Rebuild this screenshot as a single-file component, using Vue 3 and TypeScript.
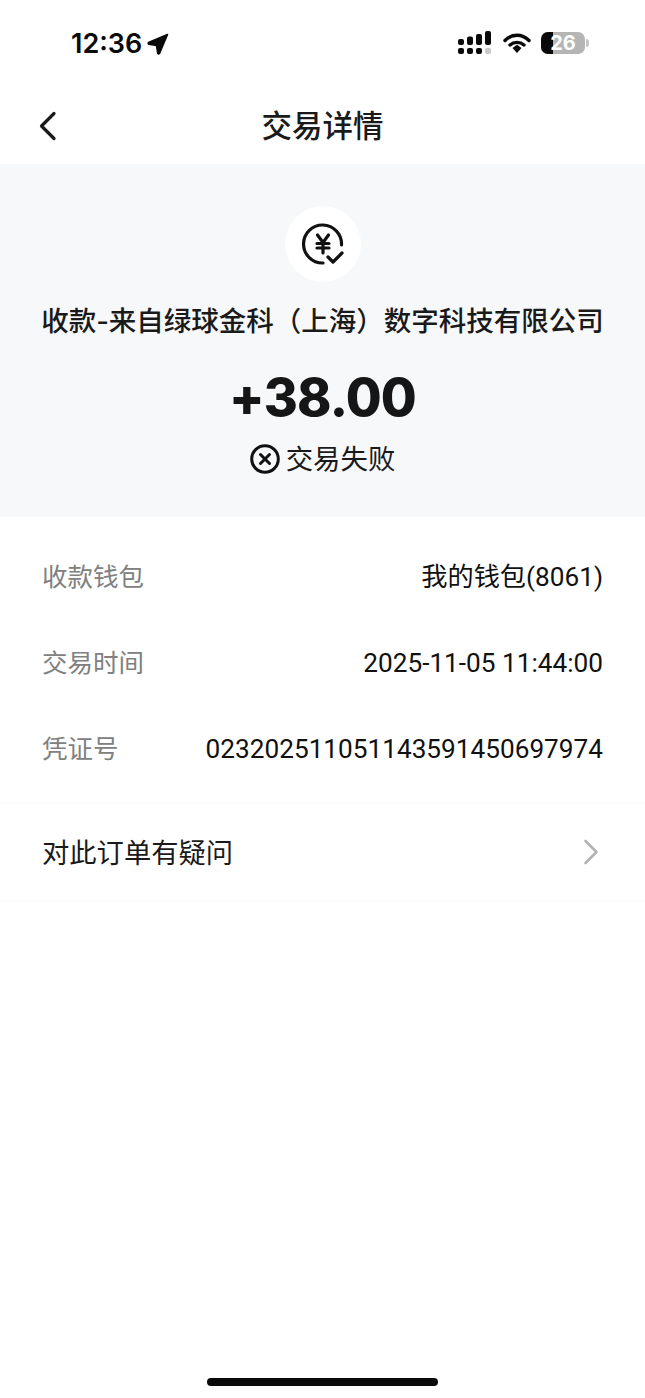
<script setup lang="ts">
interface InfoRow {
  label: string
  value: string
}

const rows: InfoRow[] = [
  { label: '收款钱包', value: '我的钱包(8061)' },
  { label: '交易时间', value: '2025-11-05 11:44:00' },
  { label: '凭证号', value: '023202511051143591450697974' }
]
</script>

<template>
  <div class="page">
    <div class="status-bar">
      <div class="time">
        <span>12:36</span>
        <svg class="arrow" width="22" height="22" viewBox="0 0 22 22">
          <path d="M20.500 1.500 L1.500 9.500 Q0.800 10.800 1.800 11.200 L9.500 12.500 L10.800 20.500 Q11.600 21.500 12.500 20.500 Z" fill="#0a0a0a" stroke="#0a0a0a" stroke-width="1.600" stroke-linejoin="round" />
        </svg>
      </div>
      <div class="status-icons">
        <svg width="36" height="24" viewBox="0 0 36 24">
          <rect x="1" y="8" width="6" height="6" rx="2" fill="#0a0a0a" />
          <rect x="10" y="5.500" width="6" height="8.500" rx="2" fill="#0a0a0a" />
          <rect x="19" y="3" width="6" height="11" rx="2" fill="#0a0a0a" />
          <rect x="28" y="0" width="6" height="14" rx="2" fill="#0a0a0a" />
          <rect x="1" y="17" width="6" height="6" rx="2" fill="#0a0a0a" />
          <rect x="10" y="17" width="6" height="6" rx="2" fill="#0a0a0a" />
          <rect x="19" y="17" width="6" height="6" rx="2" fill="#0a0a0a" />
          <rect x="28" y="17" width="6" height="6" rx="2" fill="#c9c9c9" />
        </svg>
        <svg width="28" height="22" viewBox="0 0 28 22">
          <path d="M2 8.500 C9 1.500 19 1.500 26 8.500" fill="none" stroke="#0a0a0a" stroke-width="3.400" stroke-linecap="round" />
          <path d="M7 13 C11 9.500 17 9.500 21 13" fill="none" stroke="#0a0a0a" stroke-width="3.400" stroke-linecap="round" />
          <path d="M9.500 16 L14 12.800 L18.500 16 L14 21 Z" fill="#0a0a0a" />
        </svg>
        <div class="battery">
          <div class="battery-body">
            <div class="battery-fill" />
            <span class="battery-text">26</span>
          </div>
          <div class="battery-cap" />
        </div>
      </div>
    </div>

    <div class="nav-bar">
      <svg class="back" width="20" height="30" viewBox="0 0 20 30">
        <path d="M16 2.500 L3.500 15 L16 27.500" fill="none" stroke="#1a1a1a" stroke-width="3.200" stroke-linecap="round" stroke-linejoin="round" />
      </svg>
      <div class="nav-title">交易详情</div>
    </div>

    <div class="hero">
      <div class="hero-icon">
        <svg width="44" height="44" viewBox="0 0 44 44">
          <path d="M22 41 A19 19 0 1 1 40.500 23" fill="none" stroke="#111" stroke-width="3.200" stroke-linecap="round" />
          <path d="M16.500 13 L22 20.500 L27.500 13 M16 21.500 H28 M16 26 H28 M22 20.500 V31" fill="none" stroke="#111" stroke-width="3.200" stroke-linecap="round" stroke-linejoin="round" />
          <path d="M27 35 L32 40 L41 31" fill="none" stroke="#111" stroke-width="3.200" stroke-linecap="round" stroke-linejoin="round" />
        </svg>
      </div>
      <div class="hero-name">收款-来自绿球金科（上海）数字科技有限公司</div>
      <div class="hero-amount">+38.00</div>
      <div class="hero-status">
        <svg width="30" height="30" viewBox="0 0 30 30">
          <circle cx="15" cy="15" r="13.300" fill="none" stroke="#111" stroke-width="3" />
          <path d="M10.500 10.500 L19.500 19.500 M19.500 10.500 L10.500 19.500" fill="none" stroke="#111" stroke-width="3" stroke-linecap="round" />
        </svg>
        <span>交易失败</span>
      </div>
    </div>

    <div class="info-list">
      <div v-for="row in rows" :key="row.label" class="info-row">
        <span class="info-label">{{ row.label }}</span>
        <span class="info-value">{{ row.value }}</span>
      </div>
    </div>

    <div class="question">
      <span class="question-text">对此订单有疑问</span>
      <svg width="16" height="26" viewBox="0 0 16 26">
        <path d="M2.500 2 L13.500 13 L2.500 24" fill="none" stroke="#b3b3b3" stroke-width="2.600" stroke-linecap="round" stroke-linejoin="round" />
      </svg>
    </div>

    <div class="home-indicator" />
  </div>
</template>

<style>
html,
body {
  margin: 0;
  background: #fff;
}
</style>

<style scoped>
.page {
  position: relative;
  width: 645px;
  height: 1398px;
  overflow: hidden;
  background: #fff;
  color: #1a1a1a;
  font-family: Inter, "Noto Sans CJK SC", sans-serif;
}

.status-bar {
  height: 88px;
  box-sizing: border-box;
  padding: 27px 56px 0 71px;
  display: flex;
  justify-content: space-between;
  align-items: flex-start;
}

.time {
  display: flex;
  align-items: center;
  gap: 5px;
  font-size: 27px;
  font-weight: 600;
  line-height: 34px;
  color: #0a0a0a;
}

.status-icons {
  display: flex;
  align-items: center;
  gap: 10px;
  padding-top: 4px;
}

.battery {
  display: flex;
  align-items: center;
  gap: 1px;
}

.battery-body {
  position: relative;
  width: 44px;
  height: 22px;
  border-radius: 7px;
  overflow: hidden;
  background: #b5b5b5;
}

.battery-fill {
  width: 12px;
  height: 100%;
  background: #0a0a0a;
}

.battery-text {
  position: absolute;
  inset: 0;
  text-align: center;
  font-size: 20px;
  font-weight: 700;
  line-height: 22px;
  color: #fff;
}

.battery-cap {
  width: 3px;
  height: 8px;
  border-radius: 0 3px 3px 0;
  background: #c4c4c4;
}

.nav-bar {
  position: relative;
  height: 76px;
  display: flex;
  align-items: center;
  justify-content: center;
}

.back {
  position: absolute;
  left: 38px;
  top: 23px;
}

.nav-title {
  font-size: 30.500px;
  font-weight: 500;
  line-height: 78px;
}

.hero {
  height: 353px;
  box-sizing: border-box;
  padding-top: 42px;
  background: #f7f8fa;
  display: flex;
  flex-direction: column;
  align-items: center;
}

.hero-icon {
  width: 76px;
  height: 76px;
  border-radius: 50%;
  background: #fff;
  display: flex;
  align-items: center;
  justify-content: center;
}

.hero-name {
  margin-top: 19px;
  font-size: 27.500px;
  font-weight: 500;
  line-height: 40px;
  white-space: nowrap;
}

.hero-amount {
  margin-top: 25px;
  font-size: 52px;
  font-weight: 800;
  line-height: 64px;
  letter-spacing: -0.800px;
  color: #161616;
}

.hero-status {
  margin-top: 9px;
  display: flex;
  align-items: center;
  gap: 6px;
  font-size: 27.400px;
  line-height: 40px;
}

.info-list {
  padding: 17px 42px 11px;
  border-bottom: 1px solid #f8f8f8;
}

.info-row {
  height: 86px;
  display: flex;
  align-items: center;
  justify-content: space-between;
}

.info-label {
  font-size: 25.500px;
  line-height: 36px;
  color: #808080;
}

.info-value {
  font-family: Roboto, "Noto Sans CJK SC", sans-serif;
  font-size: 26.200px;
  font-weight: 420;
  line-height: 36px;
  color: #111;
}

.question {
  height: 97px;
  box-sizing: border-box;
  padding: 0 46px 0 42px;
  display: flex;
  align-items: center;
  justify-content: space-between;
  border-bottom: 1px solid #f8f8f8;
  font-size: 27.300px;
}

.question-text {
  margin-bottom: 2px;
}

.home-indicator {
  position: absolute;
  left: 207px;
  bottom: 12px;
  width: 231px;
  height: 8px;
  border-radius: 4px;
  background: #0a0a0a;
}
</style>
